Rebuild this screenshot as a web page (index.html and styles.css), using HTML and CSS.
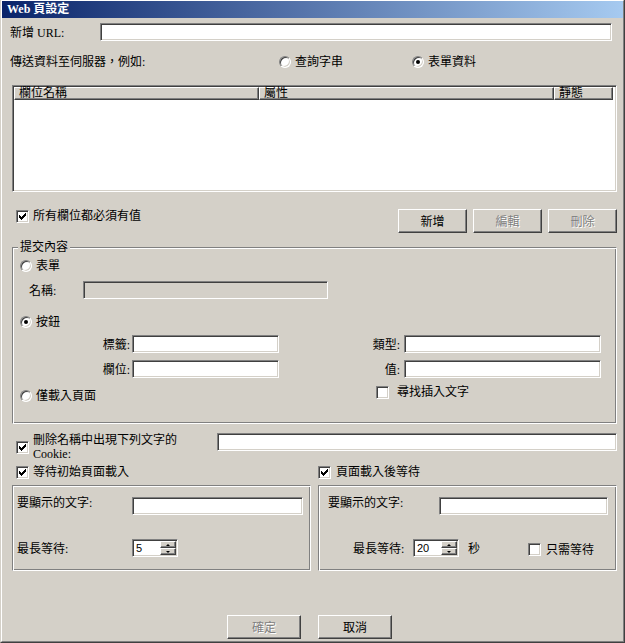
FILE: index.html
```html
<!DOCTYPE html>
<html lang="zh-Hant">
<head>
<meta charset="UTF-8">
<meta name="viewport" content="width=device-width, initial-scale=1.0">
<title>Web 頁設定</title>
<link rel="stylesheet" href="styles.css">
</head>
<body>

<div class="window">
<div class="frame">
    <div class="titlebar">Web 頁設定</div>

    <div class="content">
        <div class="row url-row">
            <span class="url-label">新增 URL:</span>
            <input type="text" class="field url-field">
        </div>

        <div class="row send-row">
            <span class="send-label">傳送資料至伺服器，例如:</span>
            <span class="option query-opt"><span class="radio"></span>查詢字串</span>
            <span class="option"><span class="radio checked"></span>表單資料</span>
        </div>

        <div class="list">
            <div class="list-head">
                <span class="col col-name">欄位名稱</span>
                <span class="col col-attr">屬性</span>
                <span class="col col-static">靜態</span>
            </div>
        </div>

        <div class="row actions-row">
            <span class="option check-all">
                <span class="check"><svg width="7" height="7" viewBox="0 0 7 7" shape-rendering="crispEdges"><path d="M6 0h1v1H6zM5 1h2v1H5zM0 2h1v1H0zM4 2h3v1H4zM0 3h2v1H0zM3 3h3v1H3zM0 4h5v1H0zM1 5h3v1H1zM2 6h1v1H2z"/></svg></span>所有欄位都必須有值
            </span>
            <div class="buttons">
                <button class="btn">新增</button>
                <button class="btn" disabled>編輯</button>
                <button class="btn" disabled>刪除</button>
            </div>
        </div>

        <div class="group submit-group">
            <span class="legend">提交內容</span>

            <div class="option opt-form"><span class="radio"></span>表單</div>

            <div class="row name-row">
                <span class="name-label">名稱:</span>
                <input type="text" class="field name-field" disabled>
            </div>

            <div class="option opt-button"><span class="radio checked"></span>按鈕</div>

            <div class="submit-grid">
                <div class="row">
                    <span class="lbl-left">標籤:</span>
                    <input type="text" class="field w-left">
                </div>
                <div class="row">
                    <span class="lbl-right">類型:</span>
                    <input type="text" class="field w-right">
                </div>
                <div class="row">
                    <span class="lbl-left">欄位:</span>
                    <input type="text" class="field w-left">
                </div>
                <div class="row">
                    <span class="lbl-right">值:</span>
                    <input type="text" class="field w-right">
                </div>
                <div class="option opt-load"><span class="radio"></span>僅載入頁面</div>
                <div class="option opt-find"><span class="check"></span>尋找插入文字</div>
            </div>
        </div>

        <div class="row cookie-row">
            <span class="option cookie-opt">
                <span class="check"><svg width="7" height="7" viewBox="0 0 7 7" shape-rendering="crispEdges"><path d="M6 0h1v1H6zM5 1h2v1H5zM0 2h1v1H0zM4 2h3v1H4zM0 3h2v1H0zM3 3h3v1H3zM0 4h5v1H0zM1 5h3v1H1zM2 6h1v1H2z"/></svg></span>
                <span class="cookie-text">刪除名稱中出現下列文字的<br>Cookie:</span>
            </span>
            <input type="text" class="field cookie-field">
        </div>

        <div class="halves wait-row">
            <span class="option wait-first">
                <span class="check"><svg width="7" height="7" viewBox="0 0 7 7" shape-rendering="crispEdges"><path d="M6 0h1v1H6zM5 1h2v1H5zM0 2h1v1H0zM4 2h3v1H4zM0 3h2v1H0zM3 3h3v1H3zM0 4h5v1H0zM1 5h3v1H1zM2 6h1v1H2z"/></svg></span>等待初始頁面載入
            </span>
            <span class="option wait-after">
                <span class="check"><svg width="7" height="7" viewBox="0 0 7 7" shape-rendering="crispEdges"><path d="M6 0h1v1H6zM5 1h2v1H5zM0 2h1v1H0zM4 2h3v1H4zM0 3h2v1H0zM3 3h3v1H3zM0 4h5v1H0zM1 5h3v1H1zM2 6h1v1H2z"/></svg></span>頁面載入後等待
            </span>
        </div>

        <div class="halves subgroups">
            <div class="group subgroup sub-left">
                <div class="row text-row">
                    <span class="sub-label">要顯示的文字:</span>
                    <input type="text" class="field sub-field">
                </div>
                <div class="row max-row">
                    <span class="sub-label">最長等待:</span>
                    <div class="spin">
                        <input type="text" value="5">
                        <div class="spin-btns"><span class="spin-btn up"></span><span class="spin-btn down"></span></div>
                    </div>
                </div>
            </div>
            <div class="group subgroup sub-right">
                <div class="row text-row">
                    <span class="sub-label">要顯示的文字:</span>
                    <input type="text" class="field sub-field">
                </div>
                <div class="row max-row">
                    <span class="max-label">最長等待:</span>
                    <div class="spin">
                        <input type="text" value="20">
                        <div class="spin-btns"><span class="spin-btn up"></span><span class="spin-btn down"></span></div>
                    </div>
                    <span class="sec">秒</span>
                    <span class="option only-opt"><span class="check"></span>只需等待</span>
                </div>
            </div>
        </div>

        <div class="footer">
            <button class="btn btn-wide" disabled>確定</button>
            <button class="btn btn-wide">取消</button>
        </div>
    </div>
</div>
</div>

</body>
</html>
```

FILE: styles.css
```css
body {
    margin: 0;
    font-family: "Liberation Serif", "Noto Sans CJK TC", serif;
    font-size: 12px;
    color: #000;
    background: #d4d0c8;
}

.window {
    width: 625px;
    height: 643px;
    box-sizing: border-box;
    border-left: 1px solid #d4d0c8;
    border-right: 1px solid #404040;
    border-bottom: 1px solid #404040;
}

.frame {
    height: 100%;
    box-sizing: border-box;
    border: 1px solid;
    border-color: #fff #808080 #808080 #fff;
}

.titlebar {
    height: 17px;
    line-height: 17px;
    padding-left: 5px;
    background: linear-gradient(to right, #0a246a, #a6caf0);
    color: #fff;
    font-weight: bold;
}

.content {
    padding: 0 6px 0 10px;
}

.row {
    display: flex;
    align-items: center;
}

/* 3d controls */
.field {
    box-sizing: border-box;
    height: 18px;
    margin: 0;
    padding: 0 2px;
    border: 1px solid;
    border-color: #808080 #fff #fff #808080;
    box-shadow: inset 1px 1px #404040, inset -1px -1px #d4d0c8;
    background: #fff;
    font: inherit;
    outline: none;
}

.field:disabled {
    background: #d4d0c8;
}

.btn {
    box-sizing: border-box;
    width: 69px;
    height: 24px;
    margin: 0;
    padding: 0;
    font: inherit;
    color: #000;
    background: #d4d0c8;
    border: 1px solid;
    border-color: #fff #404040 #404040 #fff;
    box-shadow: inset -1px -1px #808080;
}

.btn:disabled {
    color: #808080;
    text-shadow: 1px 1px #fff;
}

.option {
    display: inline-flex;
    align-items: center;
    line-height: 14px;
    white-space: nowrap;
}

.radio {
    flex: none;
    width: 12px;
    height: 12px;
    box-sizing: border-box;
    margin-right: 4px;
    border: 1px solid;
    border-color: #808080 #fff #fff #808080;
    border-radius: 50%;
    box-shadow: inset 1px 1px #404040, inset -1px -1px #d4d0c8;
    background: #fff;
    display: inline-flex;
    align-items: center;
    justify-content: center;
}

.radio.checked::after {
    content: "";
    width: 4px;
    height: 4px;
    border-radius: 50%;
    background: #000;
}

.check {
    flex: none;
    width: 13px;
    height: 13px;
    box-sizing: border-box;
    margin-right: 4px;
    border: 1px solid;
    border-color: #808080 #fff #fff #808080;
    box-shadow: inset 1px 1px #404040, inset -1px -1px #d4d0c8;
    background: #fff;
    display: inline-flex;
    align-items: center;
    justify-content: center;
}

.check svg {
    display: block;
}

.group {
    box-sizing: border-box;
    border: 1px solid;
    border-color: #808080 #fff #fff #808080;
    box-shadow: inset 1px 1px #fff, inset -1px -1px #808080;
}

/* rows */
.url-row {
    margin-top: 5px;
}

.url-label {
    width: 90px;
    margin-left: -2px;
}

.url-field {
    width: 512px;
}

.send-row {
    margin-top: 14px;
    line-height: 14px;
}

.send-label {
    width: 269px;
    margin-left: -2px;
}

.query-opt {
    width: 133px;
}

.list {
    margin-top: 16px;
    height: 107px;
    box-sizing: border-box;
    padding: 1px;
    border: 1px solid;
    border-color: #808080 #fff #fff #808080;
    box-shadow: inset 1px 1px #404040, inset -1px -1px #d4d0c8;
    background: #fff;
}

.list-head {
    display: flex;
}

.col {
    box-sizing: border-box;
    height: 13px;
    line-height: 11px;
    padding-left: 4px;
    background: #d4d0c8;
    border: 1px solid;
    border-color: #fff #404040 #404040 #fff;
    box-shadow: inset -1px -1px #808080;
}

.col-name { width: 245px; }
.col-attr { width: 295px; }
.col-static { width: 59px; }

.actions-row {
    margin-top: 17px;
    align-items: flex-start;
}

.check-all {
    margin-left: 4px;
}

.buttons {
    margin-left: auto;
    display: flex;
    gap: 6px;
}

.submit-group {
    margin-top: 14px;
    height: 177px;
    padding-left: 7px;
}

.legend {
    display: block;
    width: max-content;
    margin: -8px 0 0 -2px;
    padding: 0 2px;
    line-height: 14px;
    background: #d4d0c8;
}

.opt-form {
    display: flex;
    margin-top: 5px;
}

.name-row {
    margin-top: 8px;
    padding-left: 9px;
}

.name-label {
    width: 54px;
}

.name-field {
    width: 245px;
}

.opt-button {
    display: flex;
    margin-top: 16px;
}

.submit-grid {
    margin-top: 6px;
    display: grid;
    grid-template-columns: 300px 1fr;
    row-gap: 7px;
}

.lbl-left {
    width: 110px;
    margin-right: 2px;
    text-align: right;
}

.lbl-right {
    width: 80px;
    margin-right: 4px;
    text-align: right;
}

.w-left { width: 147px; }
.w-right { width: 197px; }

.opt-load {
    margin-top: 4px;
}

.opt-find {
    margin-left: 56px;
    align-self: start;
}

.opt-find .check {
    margin-right: 8px;
}

.cookie-row {
    margin-top: 9px;
    align-items: flex-start;
}

.cookie-opt {
    width: 201px;
    margin-left: 4px;
}

.cookie-text {
    line-height: 14px;
}

.cookie-field {
    width: 400px;
}

.halves {
    display: grid;
    grid-template-columns: 299px 299px;
    column-gap: 7px;
}

.wait-row {
    margin-top: 4px;
}

.wait-first {
    margin-left: 4px;
}

.wait-after .check {
    margin-right: 5px;
}

.subgroups {
    margin-top: 6px;
}

.subgroup {
    height: 86px;
    padding-top: 11px;
}

.sub-left { padding-left: 4px; }
.sub-right { padding-left: 9px; }

.text-row {
    align-items: flex-start;
    line-height: 12px;
}

.sub-left .sub-label { width: 115px; }
.sub-right .sub-label { width: 111px; }

.sub-left .sub-field { width: 171px; }
.sub-right .sub-field { width: 169px; }

.max-row {
    margin-top: 24px;
}

.max-label {
    width: 60px;
    margin-left: 25px;
}

.spin {
    display: flex;
    width: 46px;
    height: 18px;
    box-sizing: border-box;
    padding: 1px;
    border: 1px solid;
    border-color: #808080 #fff #fff #808080;
    box-shadow: inset 1px 1px #404040, inset -1px -1px #d4d0c8;
    background: #fff;
}

.spin input {
    flex: 1;
    min-width: 0;
    margin: 0;
    padding: 0 0 0 2px;
    border: 0;
    background: transparent;
    font: 11px "Liberation Sans", sans-serif;
    outline: none;
}

.spin-btns {
    display: flex;
    flex-direction: column;
    width: 16px;
}

.spin-btn {
    flex: 1;
    box-sizing: border-box;
    background: #d4d0c8;
    border: 1px solid;
    border-color: #fff #404040 #404040 #fff;
    box-shadow: inset -1px -1px #808080;
    display: flex;
    align-items: center;
    justify-content: center;
}

.spin-btn.up::after {
    content: "";
    border-left: 2px solid transparent;
    border-right: 2px solid transparent;
    border-bottom: 2px solid #000;
}

.spin-btn.down::after {
    content: "";
    border-left: 2px solid transparent;
    border-right: 2px solid transparent;
    border-top: 2px solid #000;
}

.sec {
    margin-left: 9px;
}

.only-opt {
    margin-left: 48px;
    margin-top: 3px;
}

.only-opt .check {
    margin-right: 5px;
}

.footer {
    margin-top: 44px;
    padding-left: 215px;
    display: flex;
    gap: 17px;
}

.btn-wide {
    width: 74px;
}
```
